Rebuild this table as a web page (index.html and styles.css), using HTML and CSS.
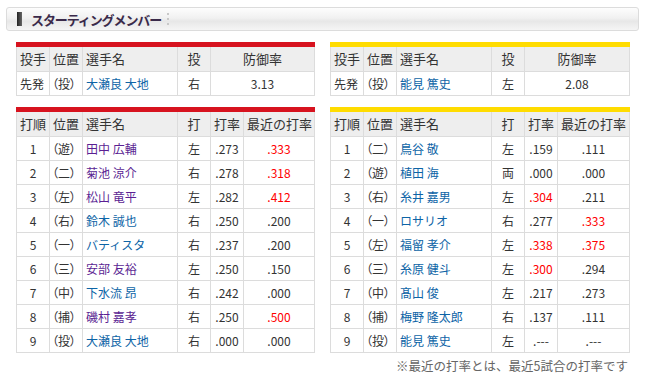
FILE: index.html
```html
<!DOCTYPE html>
<html lang="ja">
<head>
<meta charset="utf-8">
<link rel="stylesheet" href="styles.css">
</head>
<body>
<div class="title-box">
  <span class="title-mark"></span>
  <span class="title-text">スターティングメンバー</span>
  <span class="title-dots"><i></i><i></i><i></i></span>
</div>
<div class="teams">
  <div class="team">
    <div class="bar red"></div>
    <table class="tbl pit">
      <colgroup><col class="c1"><col class="c2"><col class="c3"><col class="c4"><col></colgroup>
      <tr><th class="l">投手</th><th class="l">位置</th><th class="l">選手名</th><th>投</th><th>防御率</th></tr>
      <tr><td class="l">先発</td><td class="l pos">（投）</td><td class="l"><a class="b">大瀬良 大地</a></td><td>右</td><td>3.13</td></tr>
    </table>
    <div class="bar red gap"></div>
    <table class="tbl bat">
      <colgroup><col class="c1"><col class="c2"><col class="c3"><col class="c4"><col class="c5"><col></colgroup>
      <tr><th class="l">打順</th><th class="l">位置</th><th class="l">選手名</th><th>打</th><th>打率</th><th>最近の打率</th></tr>
      <tr><td>1</td><td class="l pos">（遊）</td><td class="l"><a class="p">田中 広輔</a></td><td>左</td><td>.273</td><td class="r">.333</td></tr>
      <tr><td>2</td><td class="l pos">（二）</td><td class="l"><a class="p">菊池 涼介</a></td><td>右</td><td>.278</td><td class="r">.318</td></tr>
      <tr><td>3</td><td class="l pos">（左）</td><td class="l"><a class="p">松山 竜平</a></td><td>左</td><td>.282</td><td class="r">.412</td></tr>
      <tr><td>4</td><td class="l pos">（右）</td><td class="l"><a class="b">鈴木 誠也</a></td><td>右</td><td>.250</td><td>.200</td></tr>
      <tr><td>5</td><td class="l pos">（一）</td><td class="l"><a class="b">バティスタ</a></td><td>右</td><td>.237</td><td>.200</td></tr>
      <tr><td>6</td><td class="l pos">（三）</td><td class="l"><a class="p">安部 友裕</a></td><td>左</td><td>.250</td><td>.150</td></tr>
      <tr><td>7</td><td class="l pos">（中）</td><td class="l"><a class="b">下水流 昂</a></td><td>右</td><td>.242</td><td>.000</td></tr>
      <tr><td>8</td><td class="l pos">（捕）</td><td class="l"><a class="p">磯村 嘉孝</a></td><td>右</td><td>.250</td><td class="r">.500</td></tr>
      <tr><td>9</td><td class="l pos">（投）</td><td class="l"><a class="b">大瀬良 大地</a></td><td>右</td><td>.000</td><td>.000</td></tr>
    </table>
  </div>
  <div class="team wide">
    <div class="bar yellow"></div>
    <table class="tbl pit">
      <colgroup><col class="c1"><col class="c2"><col class="c3"><col class="c4"><col></colgroup>
      <tr><th class="l">投手</th><th class="l">位置</th><th class="l">選手名</th><th>投</th><th>防御率</th></tr>
      <tr><td class="l">先発</td><td class="l pos">（投）</td><td class="l"><a class="b">能見 篤史</a></td><td>左</td><td>2.08</td></tr>
    </table>
    <div class="bar yellow gap"></div>
    <table class="tbl bat">
      <colgroup><col class="c1"><col class="c2"><col class="c3"><col class="c4"><col class="c5"><col></colgroup>
      <tr><th class="l">打順</th><th class="l">位置</th><th class="l">選手名</th><th>打</th><th>打率</th><th>最近の打率</th></tr>
      <tr><td>1</td><td class="l pos">（二）</td><td class="l"><a class="b">鳥谷 敬</a></td><td>左</td><td>.159</td><td>.111</td></tr>
      <tr><td>2</td><td class="l pos">（遊）</td><td class="l"><a class="b">植田 海</a></td><td>両</td><td>.000</td><td>.000</td></tr>
      <tr><td>3</td><td class="l pos">（右）</td><td class="l"><a class="b">糸井 嘉男</a></td><td>左</td><td class="r">.304</td><td>.211</td></tr>
      <tr><td>4</td><td class="l pos">（一）</td><td class="l"><a class="b">ロサリオ</a></td><td>右</td><td>.277</td><td class="r">.333</td></tr>
      <tr><td>5</td><td class="l pos">（左）</td><td class="l"><a class="b">福留 孝介</a></td><td>左</td><td class="r">.338</td><td class="r">.375</td></tr>
      <tr><td>6</td><td class="l pos">（三）</td><td class="l"><a class="b">糸原 健斗</a></td><td>左</td><td class="r">.300</td><td>.294</td></tr>
      <tr><td>7</td><td class="l pos">（中）</td><td class="l"><a class="b">髙山 俊</a></td><td>左</td><td>.217</td><td>.273</td></tr>
      <tr><td>8</td><td class="l pos">（捕）</td><td class="l"><a class="b">梅野 隆太郎</a></td><td>右</td><td>.137</td><td>.111</td></tr>
      <tr><td>9</td><td class="l pos">（投）</td><td class="l"><a class="b">能見 篤史</a></td><td>左</td><td>.---</td><td>.---</td></tr>
    </table>
    <p class="note">※最近の打率とは、最近5試合の打率です</p>
  </div>
</div>
</body>
</html>
```
FILE: styles.css
```css
html, body {
  margin: 0;
  padding: 0;
  background: #fff;
}
body {
  padding-top: 7px;
  font-family: "Noto Sans CJK JP", "Noto Sans", sans-serif;
  font-size: 12px;
  color: #333;
}
.title-box {
  margin: 0 8px 0 6px;
  height: 22px;
  border: 1px solid #dcdcdc;
  border-radius: 3px;
  background: linear-gradient(#fdfdfd 0%, #f1f1f1 45%, #e7e7e7 60%, #f5f5f5 100%);
  display: flex;
  align-items: center;
}
.title-mark {
  width: 5px;
  height: 14px;
  margin-left: 10px;
  background: linear-gradient(90deg, #222, #666);
}
.title-text {
  margin-left: 9px;
  font-size: 13px;
  font-weight: bold;
  color: #3a2a4a;
  letter-spacing: -1.1px;
  line-height: 1;
}
.title-dots {
  margin-left: 6px;
  display: flex;
  flex-direction: column;
  gap: 3px;
}
.title-dots i {
  display: block;
  width: 2px;
  height: 2px;
  background: #c8c8c8;
}
.teams {
  display: flex;
  gap: 15px;
  padding-left: 16px;
  margin-top: 11px;
}
.team {
  width: 299px;
}
.team.wide {
  width: 300px;
}
.bar {
  height: 5px;
}
.bar.gap {
  margin-top: 11px;
}
.red { background: #d7131f; }
.yellow { background: #ffdc00; }
.tbl {
  width: 100%;
  border-collapse: collapse;
  table-layout: fixed;
}
.tbl col.c1, .tbl col.c2, .tbl col.c4, .tbl col.c5 { width: 33px; }
.tbl col.c3 { width: 95px; }
.tbl th, .tbl td {
  border: 1px solid #dcdcdc;
  height: 23px;
  padding: 0 3px;
  text-align: center;
  font-weight: normal;
  white-space: nowrap;
  line-height: 14px;
}
.tbl tr:first-child th { border-top: 0; height: 24px; }
.tbl th {
  background: #eeeeee;
  font-size: 13px;
}
.tbl .l { text-align: left; }
.tbl .pos {
  padding-left: 2px;
  font-feature-settings: "palt";
}
.tbl .r { color: #ff0000; }
a.b { color: #0d64a6; }
a.p { color: #5b1f93; }
.note {
  margin: 3px 2px 0 0;
  text-align: right;
  color: #666;
  font-size: 12.5px;
}
```
